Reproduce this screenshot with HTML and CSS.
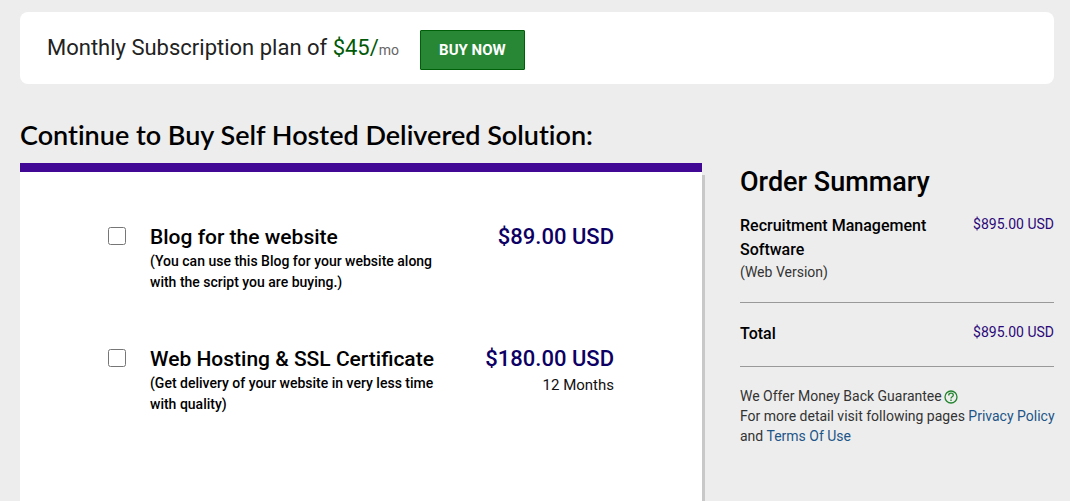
FILE: index.html
```html
<!DOCTYPE html>
<html lang="en">
<head>
    <meta charset="UTF-8">
    <meta name="viewport" content="width=device-width, initial-scale=1.0">
    <title>Buy Recruitment Management Software</title>
    <link rel="stylesheet" href="styles.css">
</head>
<body>
    <div class="container">
        <div class="plan">
            <p class="plan-text">Monthly Subscription plan of <span class="plan-price">$45/</span><small>mo</small></p>
            <button type="button" class="buy-btn">BUY NOW</button>
        </div>

        <div class="row">
            <main class="main-col">
                <h2 class="heading">Continue to Buy Self Hosted Delivered Solution:</h2>
                <form class="addons">
                    <div class="addon">
                        <input type="checkbox" id="blog" name="blog">
                        <label for="blog">
                            <span class="addon-name">Blog for the website</span>
                            <span class="addon-info">(You can use this Blog for your website along with the script you are buying.)</span>
                        </label>
                        <div class="addon-price">$89.00 USD</div>
                    </div>
                    <div class="addon">
                        <input type="checkbox" id="hosting" name="hosting">
                        <label for="hosting">
                            <span class="addon-name">Web Hosting &amp; SSL Certificate</span>
                            <span class="addon-info">(Get delivery of your website in very less time with quality)</span>
                        </label>
                        <div class="addon-price">$180.00 USD <span class="term">12 Months</span></div>
                    </div>
                </form>
            </main>

            <aside class="summary">
                <h2>Order Summary</h2>
                <div class="line">
                    <div>
                        <h3>Recruitment Management Software</h3>
                        <p class="version">(Web Version)</p>
                    </div>
                    <span class="amount">$895.00 USD</span>
                </div>
                <div class="line">
                    <h3>Total</h3>
                    <span class="amount">$895.00 USD</span>
                </div>
                <div class="note">
                    <p>We Offer Money Back Guarantee<svg class="help" viewBox="0 0 14 14" role="img" aria-label="Help">
                        <circle cx="7" cy="7" r="6"/>
                        <path d="M4.7 5.5c0-1.5 1-2.3 2.3-2.3s2.3.8 2.3 2c0 1.6-2.3 1.6-2.3 3.2M7 9.5v1.5"/>
                    </svg></p>
                    <p>For more detail visit following pages <a href="#privacy">Privacy Policy</a> and <a href="#terms">Terms Of Use</a></p>
                </div>
            </aside>
        </div>
    </div>
</body>
</html>
```

FILE: styles.css
```css
* {
    box-sizing: border-box;
}
body {
    margin: 0;
    background-color: #ededed;
    color: #000;
    font-family: Roboto, Arial, sans-serif;
    font-size: 14px;
}
h2, h3, p {
    margin: 0;
    font-weight: 500;
}
.container {
    padding: 12px 16px 0 20px;
}
.plan {
    display: flex;
    align-items: center;
    gap: 21px;
    padding: 18px 27px 14px;
    background-color: #fff;
    border-radius: 8px;
}
.plan-text {
    color: #222;
    font-size: 22px;
    font-weight: 400;
    line-height: 32px;
    padding-bottom: 2px;
}
.plan-price {
    color: #005a08;
}
.plan-text small {
    color: #666;
    font-size: 14px;
}
.buy-btn {
    height: 40px;
    padding: 0 18px;
    background-color: #278735;
    border: 1px solid #00600a;
    border-radius: 1px;
    color: #fff;
    font-family: inherit;
    font-size: 15px;
    font-weight: 700;
    cursor: pointer;
}
.row {
    display: flex;
    gap: 38px;
}
.main-col {
    flex: 1;
}
.heading {
    padding: 34px 0 11px;
    font-family: Lato, sans-serif;
    font-size: 27px;
    font-weight: 600;
    font-variant-ligatures: none;
    line-height: 34px;
}
.addons {
    min-height: 340px;
    padding: 52px 88px 0;
    background-color: #fff;
    border-top: 9px solid #410895;
    box-shadow: 3px 12px 0 #c8c8c8;
}
.addon {
    display: grid;
    grid-template-columns: 18px 1fr auto;
    min-height: 122px;
}
.addon input {
    width: 18px;
    height: 18px;
    margin: 3px 0 0;
}
.addon label {
    padding-left: 24px;
}
.addon-name {
    display: block;
    font-size: 21px;
    font-weight: 500;
    line-height: 26px;
}
.addon-info {
    display: block;
    max-width: 310px;
    padding-top: 1px;
    font-weight: 500;
    line-height: 21px;
}
.addon-price {
    color: #0d0065;
    font-size: 22px;
    font-weight: 500;
    line-height: 26px;
    text-align: right;
}
.term {
    display: block;
    color: #111;
    font-size: 15px;
    font-weight: 400;
}
.summary {
    width: 314px;
    padding-top: 80px;
}
.summary h2 {
    font-size: 27px;
    line-height: 36px;
    margin-bottom: 14px;
}
.summary h3 {
    font-size: 16px;
    line-height: 24px;
}
.line {
    display: flex;
    justify-content: space-between;
    gap: 20px;
    padding-bottom: 20px;
    margin-bottom: 19px;
    border-bottom: 1px solid #999;
}
.version {
    color: #333;
    font-weight: 400;
    line-height: 20px;
}
.amount {
    color: #2b0878;
    line-height: 20px;
    white-space: nowrap;
}
.note {
    margin-right: -8px;
    color: #333;
    line-height: 20px;
}
.note p {
    font-weight: 400;
}
.note a {
    color: #1c5588;
    text-decoration: none;
}
.help {
    width: 14px;
    height: 14px;
    margin-left: 2px;
    vertical-align: -3px;
    fill: none;
    stroke: #23842f;
    stroke-width: 1.3;
}
```
